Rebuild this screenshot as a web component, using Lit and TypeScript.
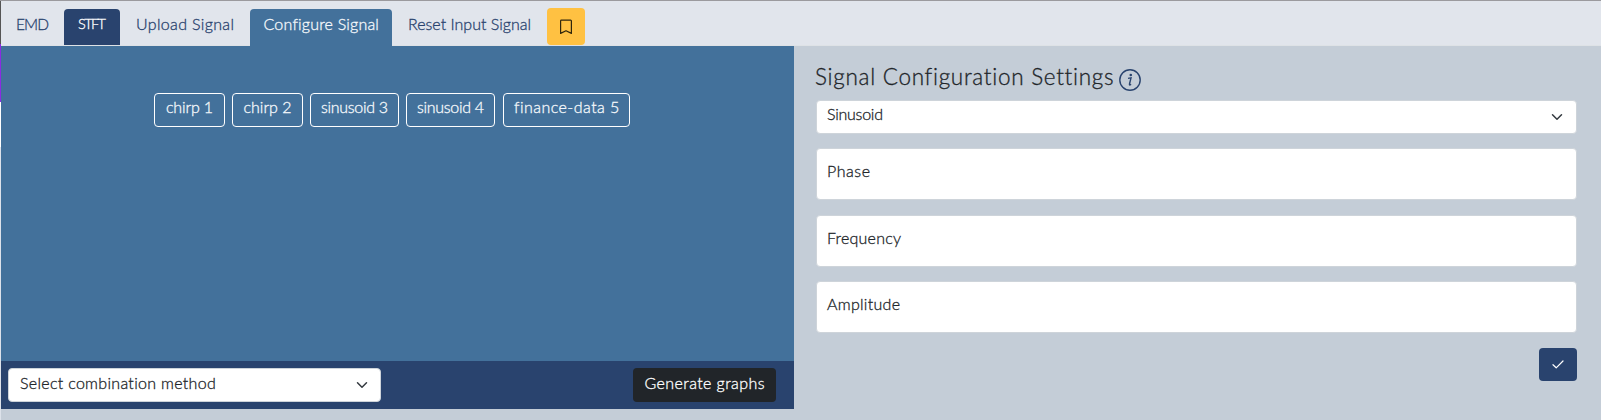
import { LitElement, html, css, svg } from "lit";
import { customElement, property } from "lit/decorators.js";

const chevron = html`<svg class="chevron" width="12" height="12" viewBox="0 0 16 16" fill="none" stroke="#343a40" stroke-width="2" stroke-linecap="round" stroke-linejoin="round">${svg`<path d="m2 5 6 6 6-6"/>`}</svg>`;

/** Text tracked so that it spans a fixed width. */
@customElement("fit-text")
class FitText extends LitElement {
  @property({ type: Number }) span = 0;
  static styles = css`
    :host { display: inline-block; white-space: nowrap; flex: none; margin-top: -1px; margin-bottom: 1px; }
    span { display: inline-block; white-space: nowrap; }
  `;
  render() {
    return html`<span><slot></slot></span>`;
  }
  firstUpdated() {
    this.fit();
    document.fonts?.ready.then(() => this.fit());
  }
  fit() {
    const inner = this.renderRoot.querySelector("span") as HTMLElement;
    const count = (this.textContent ?? "").trim().length;
    inner.style.letterSpacing = "0px";
    const natural = inner.getBoundingClientRect().width;
    inner.style.letterSpacing = `${(this.span - natural) / Math.max(1, count - 1)}px`;
    this.style.width = `${this.span}px`;
  }
}

@customElement("app-root")
class AppRoot extends LitElement {
  static styles = css`
    :host {
      display: block;
      height: 420px;
      font: 300 16px/24px Lato, "Open Sans", sans-serif;
      -webkit-text-stroke: 0.3px currentColor;
      color: #212529;
    }
    * { box-sizing: border-box; }
    .window { display: flex; height: 420px; background: #c4cdd7; border-top: 1px solid #9b9a9e; overflow: hidden; }
    .edge { width: 1px; flex: none; background: linear-gradient(#555 0 43px, #8a2be2 43px 101px, #fff 101px 146px, #dde2ea 146px); }
    .page { flex: 1; min-width: 0; }
    .tabs { display: flex; align-items: flex-end; height: 45px; background: #e1e5ec; border-bottom: 1px solid #dee2e6; color: #29436e; }
    .tab { height: 36px; display: flex; align-items: center; justify-content: center; padding-bottom: 4px; border-radius: 4px 4px 0 0; }
    .emd { width: 63px; font-size: 15.5px; }
    .stft { width: 56px; background: #29436e; color: #fff; font-size: 14.5px; }
    .upload { width: 130px; }
    .configure { width: 142px; height: 37px; margin-bottom: -1px; padding-bottom: 5px; background: #43719b; color: #f6f9fc; }
    .reset { width: 155px; }
    .save { width: 38px; height: 37px; border-radius: 4px; background: #ffc142; display: flex; align-items: center; justify-content: center; padding-top: 1px; }
    .columns { display: grid; grid-template-columns: 793px 1fr; height: 374px; }
    .signals { height: 363px; background: #43719b; display: flex; flex-direction: column; }
    .chips { flex: 1; display: flex; align-items: flex-start; gap: 7px; padding: 47px 0 0 153px; }
    .chip { height: 34px; display: flex; align-items: center; justify-content: center; padding-bottom: 4px; border: 1px solid #fff; border-radius: 4px; color: #f6f9fc; }
    .small { width: 71px; }
    .medium { width: 89px; }
    .large { width: 127px; margin-left: 1px; }
    .footer { height: 48px; background: #29436e; display: flex; align-items: center; justify-content: space-between; padding: 0 18px 0 7px; }
    .select { display: flex; align-items: center; justify-content: space-between; background: #fff; border: 1px solid #ced4da; border-radius: 4px; }
    .method { width: 373px; height: 34px; padding: 0 12px 2px 11px; }
    .method .chevron { margin-top: 2px; }
    .generate { width: 143px; height: 34px; border-radius: 4px; background: #212529; color: #fff; display: flex; align-items: center; justify-content: center; padding-bottom: 2px; }
    .settings { padding: 15px 24px 0 22px; display: flex; flex-direction: column; }
    .title { height: 39px; display: flex; align-items: flex-start; font-size: 22.5px; line-height: 33px; margin-left: -1px; }
    .info { margin: 8px 0 0 6px; }
    .kind { height: 34px; padding: 0 13px 4px 10px; }
    .kind .chevron { margin-top: 3px; }
    .field { height: 52px; display: flex; align-items: center; padding: 0 0 4px 10px; background: #fff; border: 1px solid #ced4da; border-radius: 4px; margin-top: 14px; }
    .field + .field { margin-top: 15px; }
    .field + .last { margin-top: 14px; }
    .apply { align-self: flex-end; width: 38px; height: 33px; margin-top: 15px; border-radius: 4px; background: #29436e; display: flex; align-items: center; justify-content: center; }
  `;

  render() {
    return html`
      <div class="window">
        <div class="edge"></div>
        <div class="page">
          <nav class="tabs">
            <div class="tab emd"><fit-text span="33">EMD</fit-text></div>
            <div class="tab stft"><fit-text span="28">STFT</fit-text></div>
            <div class="tab upload"><fit-text span="98">Upload Signal</fit-text></div>
            <div class="tab configure"><fit-text span="115">Configure Signal</fit-text></div>
            <div class="tab reset"><fit-text span="123">Reset Input Signal</fit-text></div>
            <div class="save">
              <svg width="16" height="16" viewBox="0 0 16 16" fill="none" stroke="#30260c" stroke-width="1.2" stroke-linejoin="round"><path d="M2.6 1.9a.8.8 0 0 1 .8-.8h9.2a.8.8 0 0 1 .8.8V14.4L8 11.8l-5.4 2.6z"/></svg>
            </div>
          </nav>
          <div class="columns">
            <section class="signals">
              <div class="chips">
                <div class="chip small"><fit-text span="47">chirp 1</fit-text></div>
                <div class="chip small"><fit-text span="48">chirp 2</fit-text></div>
                <div class="chip medium"><fit-text span="67">sinusoid 3</fit-text></div>
                <div class="chip medium"><fit-text span="67">sinusoid 4</fit-text></div>
                <div class="chip large"><fit-text span="105">finance-data 5</fit-text></div>
              </div>
              <div class="footer">
                <div class="select method"><fit-text span="196">Select combination method</fit-text>${chevron}</div>
                <div class="generate"><fit-text span="120">Generate graphs</fit-text></div>
              </div>
            </section>
            <section class="settings">
              <div class="title">
                <fit-text span="298">Signal Configuration Settings</fit-text>
                <svg class="info" width="22" height="22" viewBox="0 0 22 22"><circle cx="11" cy="11" r="10.2" fill="none" stroke="#29436e" stroke-width="1.4"/><circle cx="11.8" cy="6" r="1.3" fill="#29436e"/><path d="M9 9.4l3-.5-1.5 6.1q-.2 1.2.6.9.5-.2.9-.7" fill="none" stroke="#29436e" stroke-width="1.4"/></svg>
              </div>
              <div class="select kind"><fit-text span="56">Sinusoid</fit-text>${chevron}</div>
              <div class="field"><fit-text span="43">Phase</fit-text></div>
              <div class="field"><fit-text span="74">Frequency</fit-text></div>
              <div class="field last"><fit-text span="73">Amplitude</fit-text></div>
              <div class="apply">
                <svg width="12" height="9" viewBox="0 0 12 9" fill="none" stroke="#fff" stroke-width="1.2" stroke-linecap="round" stroke-linejoin="round"><path d="M1 4.7 4.2 7.8 11 1"/></svg>
              </div>
            </section>
          </div>
        </div>
      </div>
    `;
  }
}
